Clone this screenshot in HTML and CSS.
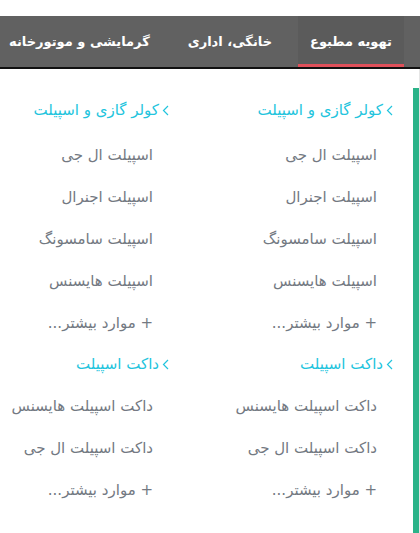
FILE: index.html
```html
<!DOCTYPE html>
<html lang="fa" dir="rtl">
<head>
  <meta charset="UTF-8" />
  <meta name="viewport" content="width=device-width, initial-scale=1.0"/>
  <title>منو</title>
  <link rel="stylesheet" href="styles.css">
</head>
<body>

  <nav class="tabs">
    <div class="tab active">تهویه مطبوع</div>
    <div class="tab">خانگی، اداری</div>
    <div class="tab">گرمایشی و موتورخانه</div>
  </nav>

  <div class="panel">
    <div class="scroll">
      <div class="thumb"></div>
    </div>

    <div class="cols">
      <div class="col">
        <div class="group">
          <a class="head"><svg width="7" height="11" viewBox="0 0 7 11"><polyline points="6,1 1.5,5.5 6,10" /></svg>کولر گازی و اسپیلت</a>
          <a class="item">اسپیلت ال جی</a>
          <a class="item">اسپیلت اجنرال</a>
          <a class="item">اسپیلت سامسونگ</a>
          <a class="item">اسپیلت هایسنس</a>
          <a class="item">+ موارد بیشتر...</a>
        </div>
        <div class="group">
          <a class="head"><svg width="7" height="11" viewBox="0 0 7 11"><polyline points="6,1 1.5,5.5 6,10" /></svg>داکت اسپیلت</a>
          <a class="item">داکت اسپیلت هایسنس</a>
          <a class="item">داکت اسپیلت ال جی</a>
          <a class="item">+ موارد بیشتر...</a>
        </div>
      </div>

      <div class="col">
        <div class="group">
          <a class="head"><svg width="7" height="11" viewBox="0 0 7 11"><polyline points="6,1 1.5,5.5 6,10" /></svg>کولر گازی و اسپیلت</a>
          <a class="item">اسپیلت ال جی</a>
          <a class="item">اسپیلت اجنرال</a>
          <a class="item">اسپیلت سامسونگ</a>
          <a class="item">اسپیلت هایسنس</a>
          <a class="item">+ موارد بیشتر...</a>
        </div>
        <div class="group">
          <a class="head"><svg width="7" height="11" viewBox="0 0 7 11"><polyline points="6,1 1.5,5.5 6,10" /></svg>داکت اسپیلت</a>
          <a class="item">داکت اسپیلت هایسنس</a>
          <a class="item">داکت اسپیلت ال جی</a>
          <a class="item">+ موارد بیشتر...</a>
        </div>
      </div>
    </div>
  </div>

</body>
</html>
```

FILE: styles.css
```css
body {
  margin: 0;
  padding-top: 16px;
  font-family: 'DejaVu Sans', sans-serif;
  background: #fff;
  direction: rtl;
  overflow: hidden;
}

.tabs {
  display: flex;
  height: 51px;
  background: #616161;
  border-bottom: 2px solid #111;
  padding-right: 16px;
  overflow: hidden;
}

.tab {
  display: flex;
  align-items: center;
  padding: 0 12px;
  margin-left: 14px;
  color: #fff;
  font-size: 13px;
  font-weight: bold;
  white-space: nowrap;
}

.tab.active {
  background: #5b5b5b;
  box-shadow: inset 0 -3px 0 #e0505a;
}

.panel {
  display: flex;
  height: 464px;
}

.scroll {
  width: 7px;
  flex-shrink: 0;
  border-right: 1px solid #e6e6e6;
  padding-top: 19px;
  box-sizing: border-box;
}

.thumb {
  height: 100%;
  background: #2bb389;
}

.cols {
  display: flex;
  padding-top: 20px;
}

.col {
  width: 224px;
  flex-shrink: 0;
  padding-right: 20px;
  box-sizing: border-box;
}

.group a {
  display: block;
  height: 42px;
  line-height: 42px;
  white-space: nowrap;
  font-size: 15px;
}

.group + .group {
  margin-top: -1px;
}

.group + .group .head {
  margin-bottom: 0;
}

.head {
  color: #22c4dd;
  margin-bottom: 3px;
}

.head svg {
  margin-left: 3px;
  vertical-align: -1px;
}

.head polyline {
  fill: none;
  stroke: #22c4dd;
  stroke-width: 1.2;
}

.item {
  color: #737982;
  padding-right: 16px;
}
```
